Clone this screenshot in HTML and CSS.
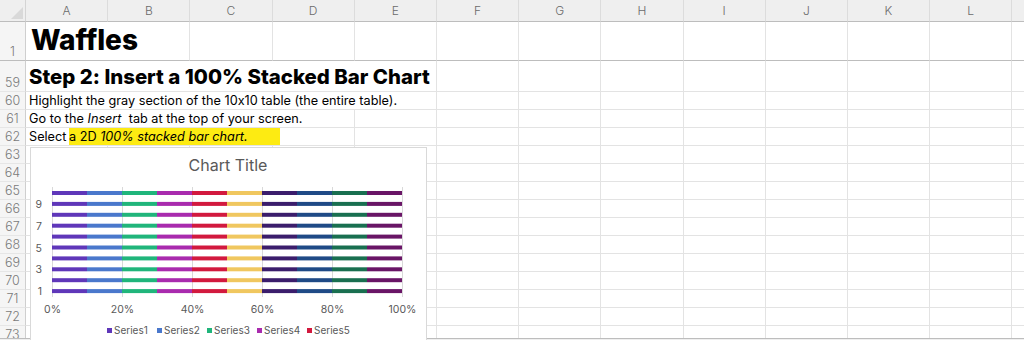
FILE: index.html
```html
<!DOCTYPE HTML>
<html>
	<head>
		<title>Waffles</title>
		<link rel="stylesheet" href="styles.css">
	</head>
	<body>
		<div class="page">
			<div id="sheet" class="sheet"></div>
			<div class="chartBox">
				<svg id="chart" class="chart" width="397" height="200"></svg>
			</div>
			<div class="tabs">
				<div class="tabGap"></div>
				<div class="tabActive"></div>
				<div class="tabRest"></div>
			</div>
		</div>
		<script>
			function buildSheet()
			{
				var letters = "ABCDEFGHIJKLM".split("");
				var rows = [
					{ num: 1, cls: "cellTitle", span: 2, html: "Waffles" },
					{ num: 59, cls: "cellHeading", span: 5, html: "Step 2: Insert a 100% Stacked Bar Chart" },
					{ num: 60, cls: "cellText", span: 5, html: "Highlight the gray section of the 10x10 table (the entire table)." },
					{ num: 61, cls: "cellText", span: 4, html: "Go to the <i>Insert</i>&nbsp; tab at the top of your screen." },
					{ num: 62, cls: "cellText", span: 4, html: "Select <span class=\"mark\">a 2D <i>100% stacked bar chart.</i></span>" }
				];
				for (var n = 63; n <= 73; n++)
				{
					rows.push({ num: n, cls: "", span: 0, html: "" });
				}

				var out = "<div class=\"corner\"><span class=\"cornerMark\"></span></div>";
				for (var c = 0; c < letters.length; c++)
				{
					out += "<div class=\"colHead\">" + letters[c] + "</div>";
				}
				for (var r = 0; r < rows.length; r++)
				{
					var row = rows[r];
					var extra = r == 0 ? " frozen" : "";
					out += "<div class=\"rowHead" + extra + "\">" + row.num + "</div>";
					var col = 0;
					if (row.span > 0)
					{
						out += "<div class=\"cell " + row.cls + extra + "\" style=\"grid-column: span " + row.span + "\"><span class=\"cellInner\">" + row.html + "</span></div>";
						col = row.span;
					}
					for (; col < letters.length; col++)
					{
						out += "<div class=\"cell" + extra + "\"></div>";
					}
				}
				document.getElementById("sheet").innerHTML = out;
			}

			// chart: ten rows of ten equal segments
			function buildChart()
			{
				var colors = ["#5f37b9", "#4a78cc", "#20b57b", "#a92bae", "#d2193e",
					"#f0c75f", "#3b1d6c", "#1f4a86", "#196f50", "#691566"];
				var plotLeft = 22, segWidth = 35, plotTop = 44, pitch = 10.9;
				var svg = "<text class=\"chartTitle\" x=\"198\" y=\"24\">Chart Title</text>";
				for (var k = 0; k <= 5; k++)
				{
					var gx = plotLeft + 70 * k + 0.5;
					svg += "<line class=\"grid\" x1=\"" + gx + "\" y1=\"40\" x2=\"" + gx + "\" y2=\"150\" />";
					svg += "<text class=\"axisX\" x=\"" + gx + "\" y=\"166\">" + (k * 20) + "%</text>";
				}
				for (var i = 0; i < 10; i++)
				{
					var barY = plotTop + i * pitch;
					for (var j = 0; j < 10; j++)
					{
						svg += "<rect x=\"" + (plotLeft + segWidth * j) + "\" y=\"" + barY.toFixed(1) + "\" width=\"" + segWidth + "\" height=\"4\" fill=\"" + colors[j] + "\" />";
					}
					var cat = 10 - i;
					if (cat % 2 == 1)
					{
						svg += "<text class=\"axisY\" x=\"12\" y=\"" + (barY + 6).toFixed(1) + "\">" + cat + "</text>";
					}
				}
				for (var s = 0; s < 5; s++)
				{
					var lx = 77 + 50 * s;
					svg += "<rect x=\"" + lx + "\" y=\"181\" width=\"5\" height=\"5\" fill=\"" + colors[s] + "\" />";
					svg += "<text class=\"legend\" x=\"" + (lx + 7) + "\" y=\"187\">Series" + (s + 1) + "</text>";
				}
				document.getElementById("chart").innerHTML = svg;
			}

			buildSheet();
			buildChart();
		</script>
	</body>
</html>
```

FILE: styles.css
```css
body
{
	margin: 0;
	background-color: white;
	font-family: Inter, "DejaVu Sans", sans-serif;
	font-feature-settings: "calt" 0;
	color: black;
}
div.page
{
	position: relative;
	width: 1024px;
	height: 340px;
	overflow: hidden;
}
div.sheet
{
	display: grid;
	grid-template-columns: 26px repeat(13, 82.2px);
	grid-template-rows: 22px 39px 31px repeat(14, 18px);
	height: 338px;
	overflow: hidden;
}
div.corner
{
	position: relative;
	background-color: #efefef;
	border-right: 1px solid #d4d4d4;
	border-bottom: 1px solid #bdbdbd;
}
span.cornerMark
{
	position: absolute;
	right: 2px;
	bottom: 2px;
	width: 0;
	height: 0;
	border-left: 12px solid transparent;
	border-bottom: 12px solid #d9d9d9;
}
div.colHead
{
	background-color: #efefef;
	border-right: 1px solid #dcdcdc;
	border-bottom: 1px solid #bdbdbd;
	color: #6b6b6b;
	font-size: 12px;
	font-weight: 300;
	text-align: center;
	line-height: 22px;
}
div.rowHead
{
	background-color: #f5f5f5;
	border-right: 1px solid #cfcfcf;
	border-bottom: 1px solid #e6e6e6;
	color: #7a7a7a;
	font-size: 12.5px;
	font-weight: 300;
	text-align: center;
	display: flex;
	align-items: flex-end;
	justify-content: center;
	padding-bottom: 1px;
}
div.cell
{
	border-right: 1px solid #e3e3e3;
	border-bottom: 1px solid #e3e3e3;
	display: flex;
	align-items: flex-end;
	white-space: nowrap;
	overflow: hidden;
}
div.frozen
{
	border-bottom: 1px solid #bdbdbd;
}
div.cellTitle
{
	font-size: 28px;
	font-weight: 800;
	padding-left: 5px;
	padding-bottom: 3px;
}
div.cellHeading
{
	font-size: 20.4px;
	font-weight: 800;
	padding-left: 3px;
	padding-bottom: 2px;
}
div.cellText
{
	font-size: 12.7px;
	padding-left: 3px;
	line-height: 17px;
}
span.mark
{
	display: inline-block;
	height: 17px;
	line-height: 17px;
	background-color: #fdeb12;
	padding-right: 32px;
	margin-left: -1px;
}
div.chartBox
{
	position: absolute;
	left: 30px;
	top: 147px;
	width: 397px;
	height: 200px;
	background-color: white;
	border: 1px solid #d9d9d9;
	box-sizing: border-box;
}
svg.chart
{
	display: block;
	margin: -1px;
	font-family: Inter, "DejaVu Sans", sans-serif;
}
.chartTitle
{
	font-size: 16px;
	fill: #595959;
	text-anchor: middle;
}
.grid
{
	stroke: #d9d9d9;
	stroke-width: 1;
}
.axisX
{
	font-size: 10.5px;
	fill: #595959;
	text-anchor: middle;
}
.axisY
{
	font-size: 10.5px;
	fill: #595959;
	text-anchor: end;
}
.legend
{
	font-size: 10px;
	fill: #595959;
}
div.tabs
{
	display: flex;
	height: 2px;
}
div.tabGap
{
	width: 123px;
	border-top: 1px solid #bdbdbd;
	background-color: #efefef;
}
div.tabActive
{
	width: 52px;
	background-color: white;
}
div.tabRest
{
	flex: 1;
	border-top: 1px solid #bdbdbd;
	background-color: #efefef;
}
```
